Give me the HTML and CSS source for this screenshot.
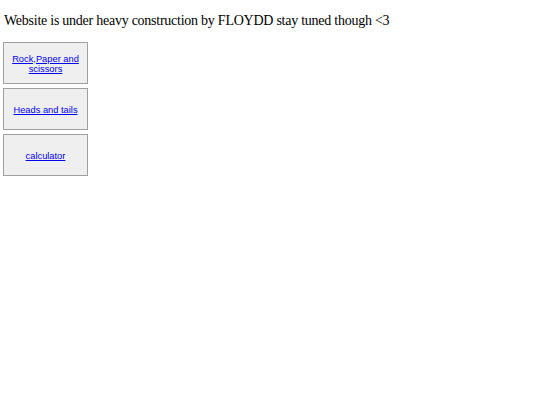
FILE: index.html
```html
<!DOCTYPE html>
<html>
<head>
<meta charset="utf-8">
<link rel="stylesheet" href="styles.css">
</head>
<body>
<p class="title">Website is under heavy construction by FLOYDD stay tuned though &lt;3</p>
<div class="menu">
  <div class="card"><a href="#">Rock,Paper and scissors</a></div>
  <div class="card"><a href="#">Heads and tails</a></div>
  <div class="card"><a href="#">calculator</a></div>
</div>
</body>
</html>
```
FILE: styles.css
```css
html, body {
  margin: 0;
  padding: 0;
  background: #ffffff;
}
.title {
  font-family: "Liberation Serif", "Times New Roman", serif;
  font-size: 14px;
  letter-spacing: -0.25px;
  line-height: 16px;
  margin: 0;
  padding: 13px 4px 0;
  color: #000;
}
.menu {
  display: flex;
  flex-direction: column;
  gap: 4px;
  padding: 13px 0 0 3px;
}
.card {
  box-sizing: border-box;
  width: 85px;
  height: 42px;
  background: #efefef;
  border: 1px solid #a0a0a0;
  display: flex;
  align-items: center;
  justify-content: center;
  text-align: center;
  padding: 1px 6px 0;
}
.card a {
  font-family: "Liberation Sans", Arial, sans-serif;
  font-size: 9.3px;
  line-height: 10px;
  color: #0000ee;
  text-decoration: underline;
}
```
